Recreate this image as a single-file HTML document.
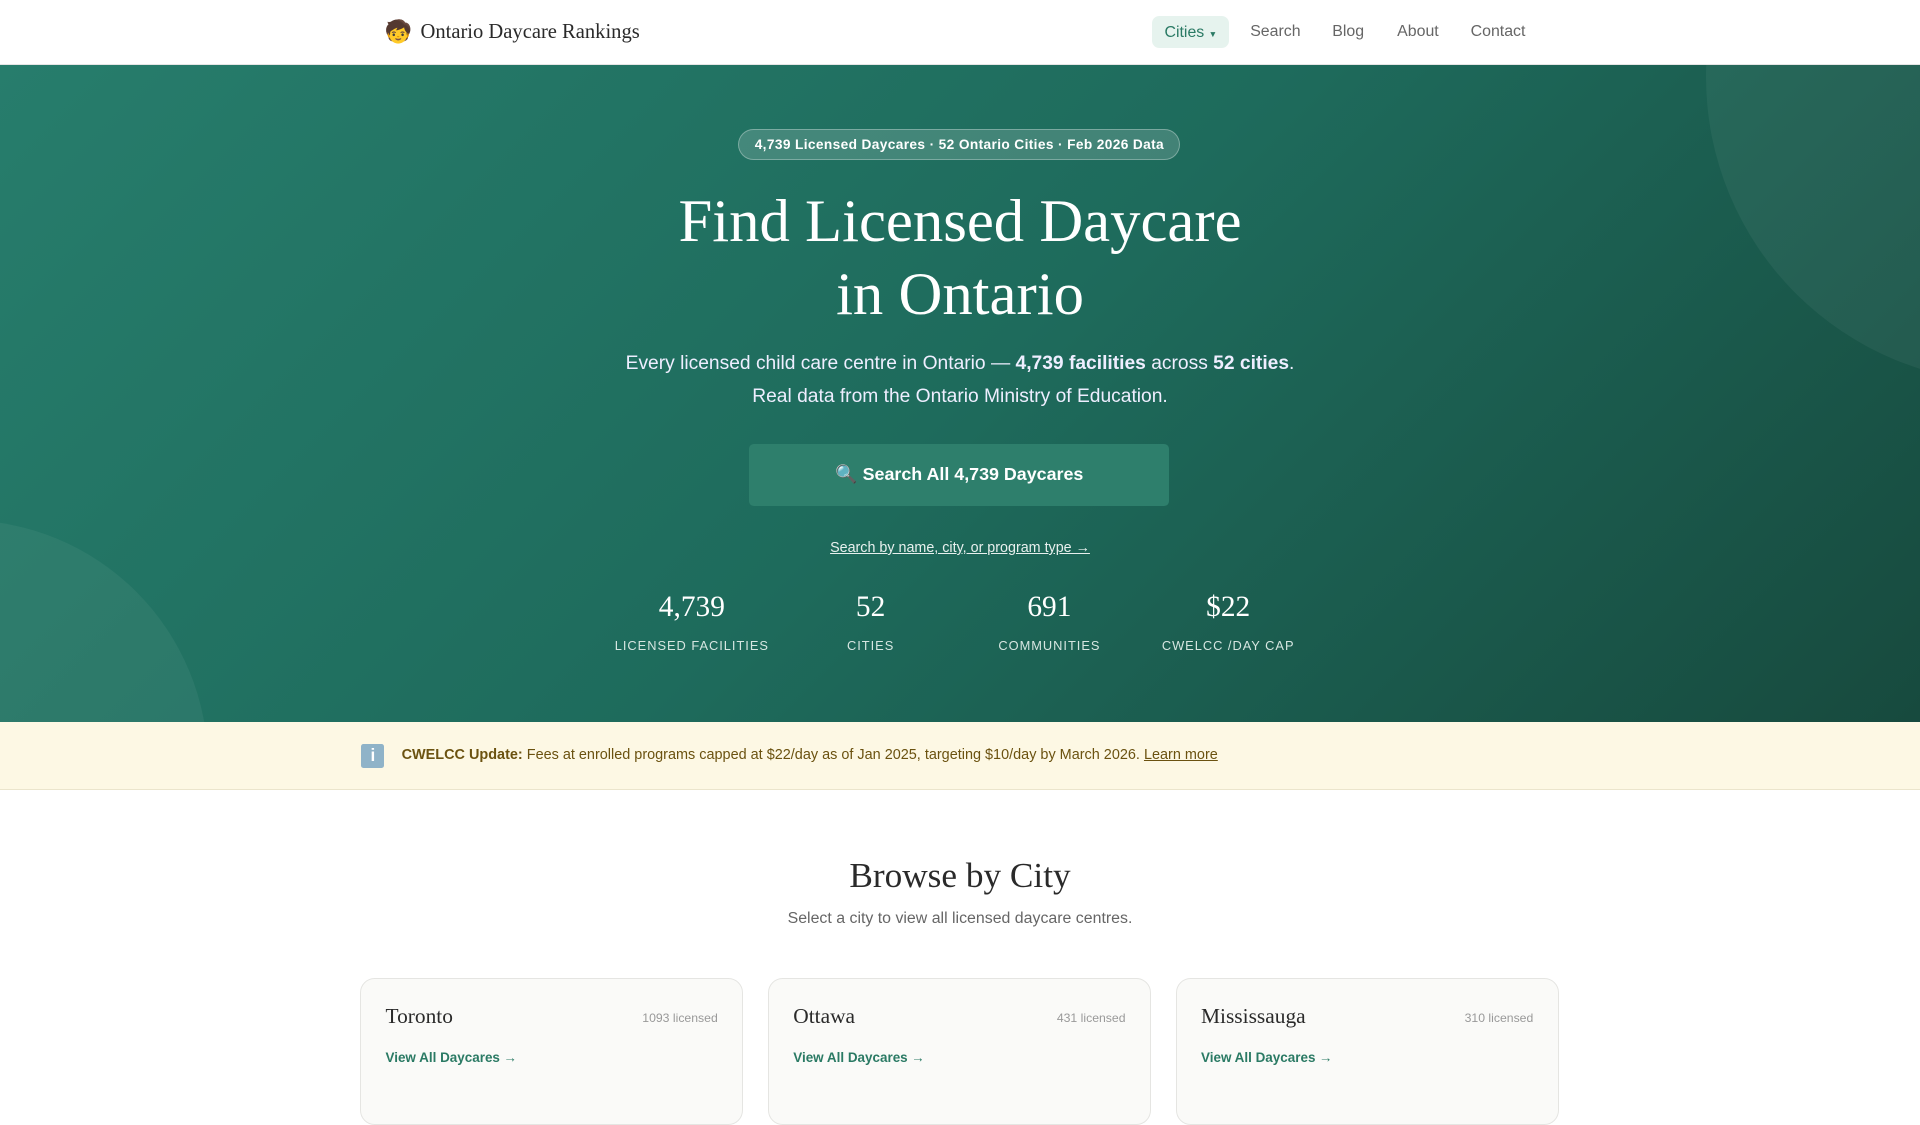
<!DOCTYPE html>
<html><head><meta charset="utf-8">
<style>
html{zoom:1.2245}
*{box-sizing:border-box;margin:0;padding:0}
body{width:1568px;height:882px;overflow:hidden;font-family:"Liberation Sans",sans-serif;background:#fff;color:#222}
.serif{font-family:"Liberation Serif",serif}
nav{height:53px;border-bottom:1px solid #e5e5e5;position:relative;background:#fff}
.logo{position:absolute;left:314px;top:16px;font-size:16.8px;color:#2a2a2a;display:flex;align-items:center;gap:7px}
.logo .em{font-size:18px;font-family:"Noto Color Emoji","DejaVu Sans",sans-serif}
.nav a{position:absolute;top:19px;font-size:13px;color:#666;text-decoration:none}
.pill{position:absolute;left:941px;top:13px;width:63px;height:26px;background:#e6f3ee;border-radius:6px;color:#2a7a64;font-size:13px;line-height:27px;text-align:center}
.hero{position:relative;height:537px;background:linear-gradient(135deg,#277d6c 0%,#1e6b5c 50%,#174a3e 100%);overflow:hidden;color:#fff;text-align:center}
.c1{position:absolute;left:1393px;top:-240px;width:500px;height:500px;border-radius:50%;background:rgba(255,255,255,0.05)}
.c2{position:absolute;left:-230px;top:372px;width:400px;height:400px;border-radius:50%;background:rgba(255,255,255,0.05)}
.badge{position:absolute;left:603px;top:52px;width:361px;height:26px;border-radius:13px;background:rgba(255,255,255,0.16);border:1px solid rgba(255,255,255,0.3);font-size:11.2px;font-weight:bold;line-height:24px;letter-spacing:.3px}
h1{position:absolute;left:0;right:0;top:98px;font-size:49.6px;line-height:60px;font-weight:normal}
.sub{position:absolute;left:0;right:0;top:230px;font-size:15.7px;line-height:27px;color:#eef}
.btn{position:absolute;left:612px;top:310px;width:343px;height:50px;background:#2e7f6c;border-radius:4px;font-size:14.6px;font-weight:bold;line-height:50px}
.lnk{position:absolute;left:0;right:0;top:388px;font-size:11.7px;color:#e8f0ee;}
.lnk span{text-decoration:underline}
.stat{position:absolute;top:430px;width:146px;margin-left:-73px}
.stat b{display:block;font-family:"Liberation Serif",serif;font-weight:normal;font-size:24px}
.stat i{display:block;font-style:normal;font-size:10.5px;letter-spacing:.8px;margin-top:11px;color:#d6e6e1}
.banner{height:55px;background:#fdf8e4;border-bottom:1px solid #ebe5cc;position:relative;font-size:11.8px;color:#6b5210}
.banner .ic{position:absolute;left:295px;top:18px;width:19px;height:19px;background:#8fb3c8;border-radius:2px;color:#fff;font-weight:bold;text-align:center;line-height:19px;font-family:"Liberation Sans",sans-serif;font-size:14px}
.banner .t{position:absolute;left:328px;top:20px}
h2{position:absolute;left:0;right:0;top:699px;text-align:center;font-size:28.8px;font-weight:normal;color:#2a2a2a}
.bsub{position:absolute;left:0;right:0;top:743px;text-align:center;font-size:13px;color:#666}
.card{position:absolute;top:799px;width:313px;height:120px;background:#fafaf8;border:1px solid #e5e5e2;border-radius:12px}
.card .n{position:absolute;left:20px;top:20px;font-size:17.5px;font-family:"Liberation Serif",serif;color:#2a2a2a}
.card .c{position:absolute;right:20px;top:26px;font-size:10px;color:#999}
.card .v{position:absolute;left:20px;top:58px;font-size:11px;font-weight:bold;color:#2a7a64}
</style></head><body>
<nav>
<div class="logo"><span class="em">🧒</span><span class="serif">Ontario Daycare Rankings</span></div>
<div class="nav">
<div class="pill">Cities <span style="font-size:7px">▼</span></div>
<a style="left:1021px">Search</a><a style="left:1088px">Blog</a><a style="left:1141px">About</a><a style="left:1201px">Contact</a>
</div>
</nav>
<div class="hero">
<div class="c1"></div><div class="c2"></div>
<div class="badge">4,739 Licensed Daycares · 52 Ontario Cities · Feb 2026 Data</div>
<h1 class="serif">Find Licensed Daycare<br>in Ontario</h1>
<div class="sub">Every licensed child care centre in Ontario — <b>4,739 facilities</b> across <b>52 cities</b>.<br>Real data from the Ontario Ministry of Education.</div>
<div class="btn">🔍 Search All 4,739 Daycares</div>
<div class="lnk"><span>Search by name, city, or program type →</span></div>
<div class="stat" style="left:565px"><b>4,739</b><i>LICENSED FACILITIES</i></div>
<div class="stat" style="left:711px"><b>52</b><i>CITIES</i></div>
<div class="stat" style="left:857px"><b>691</b><i>COMMUNITIES</i></div>
<div class="stat" style="left:1003px"><b>$22</b><i>CWELCC /DAY CAP</i></div>
</div>
<div class="banner"><div class="ic">i</div><div class="t"><b>CWELCC Update:</b> Fees at enrolled programs capped at $22/day as of Jan 2025, targeting $10/day by March 2026. <span style="text-decoration:underline">Learn more</span></div></div>
<h2 class="serif">Browse by City</h2>
<div class="bsub">Select a city to view all licensed daycare centres.</div>
<div class="card" style="left:294px"><div class="n">Toronto</div><div class="c">1093 licensed</div><div class="v">View All Daycares →</div></div>
<div class="card" style="left:627px"><div class="n">Ottawa</div><div class="c">431 licensed</div><div class="v">View All Daycares →</div></div>
<div class="card" style="left:960px"><div class="n">Mississauga</div><div class="c">310 licensed</div><div class="v">View All Daycares →</div></div>
</body></html>
